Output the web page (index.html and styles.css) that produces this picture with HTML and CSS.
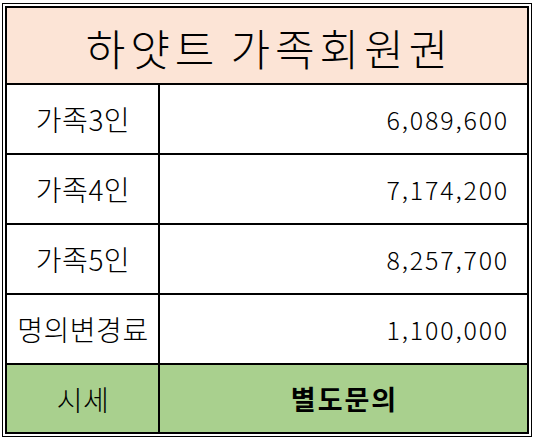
FILE: index.html
```html
<!DOCTYPE html>
<html lang="ko">
<head>
<meta charset="utf-8">
<link rel="stylesheet" href="styles.css">
</head>
<body>
<div class="frame">
  <div class="table">
    <div class="cell title">하얏트 가족회원권</div>
    <div class="cell label">가족3인</div>
    <div class="cell num">6,089,600</div>
    <div class="cell label">가족4인</div>
    <div class="cell num">7,174,200</div>
    <div class="cell label">가족5인</div>
    <div class="cell num">8,257,700</div>
    <div class="cell label">명의변경료</div>
    <div class="cell num">1,100,000</div>
    <div class="cell label green">시세</div>
    <div class="cell green strong">별도문의</div>
  </div>
</div>
</body>
</html>
```

FILE: styles.css
```css
html, body {
  margin: 0;
  padding: 0;
  background: #fff;
}
body {
  font-family: "Noto Sans CJK KR", "Noto Sans", sans-serif;
  color: #000;
}
.frame {
  margin: 3px 0 0 2px;
  width: 524px;
  border: 1px solid #000;
  padding: 2px;
}
.table {
  border: 2px solid #000;
  display: grid;
  grid-template-columns: 151px 367px;
  grid-template-rows: 75px 68px 68px 68px 68px 67px;
  gap: 2px;
  background: #000;
}
.cell {
  background: #fff;
  display: flex;
  align-items: center;
  font-size: 25px;
  font-weight: 300;
  line-height: 1;
}
.title {
  grid-column: 1 / 3;
  background: #fce4d6;
  justify-content: center;
  font-size: 43px;
  letter-spacing: 5px;
  word-spacing: -6px;
  padding: 3px 0 0 5px;
}
.label {
  justify-content: center;
  font-size: 28px;
  letter-spacing: 0.5px;
  padding-left: 1px;
}
.num {
  justify-content: flex-end;
  padding-right: 18px;
  letter-spacing: 1.8px;
}
.green {
  background: #a9d08e;
}
.strong {
  justify-content: center;
  font-size: 27px;
  font-weight: 700;
  letter-spacing: 2px;
  padding-left: 2px;
}
```
